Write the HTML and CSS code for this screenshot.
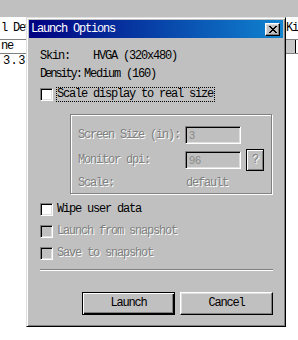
FILE: index.html
```html
<!DOCTYPE html>
<html lang="en">
<head>
  <meta charset="UTF-8">
  <title>Launch Options</title>
  <link rel="stylesheet" href="styles.css">
</head>
<body>
  <div class="screen">
    <!-- window behind the dialog -->
    <div class="bg-strip"></div>
    <div class="bg-row bg-head">
      <span class="bg-left">l Dev</span>
      <span class="bg-right">Kit</span>
    </div>
    <div class="bg-row bg-cols">
      <span class="bg-left">ne</span>
      <span class="bg-cell"></span>
    </div>
    <div class="bg-row bg-data">
      <span class="bg-left wide">3.3</span>
    </div>

    <div class="dialog">
      <div class="titlebar">
        <span class="title">Launch Options</span>
        <span class="close-btn">
          <svg width="8" height="7" viewBox="0 0 8 7" shape-rendering="crispEdges">
            <path fill="#000" d="M0 0h2v1H0z M6 0h2v1H6z M1 1h2v1H1z M5 1h2v1H5z M2 2h4v1H2z M3 3h2v1H3z M2 4h4v1H2z M1 5h2v1H1z M5 5h2v1H5z M0 6h2v1H0z M6 6h2v1H6z"/>
          </svg>
        </span>
      </div>

      <div class="dialog-body">
        <div class="info-row"><span class="info-label skin">Skin:</span><span>HVGA (320x480)</span></div>
        <div class="info-row"><span class="info-label density">Density:</span><span>Medium (160)</span></div>

        <div class="check-row first">
          <span class="checkbox"></span>
          <span class="check-label focused">Scale display to real size</span>
        </div>

        <div class="group">
          <div class="group-row">
            <span class="group-label disabled">Screen Size (in):</span>
            <span class="field">3</span>
          </div>
          <div class="group-row tall">
            <span class="group-label disabled">Monitor dpi:</span>
            <span class="field">96</span>
            <span class="help-btn disabled">?</span>
          </div>
          <div class="group-row short">
            <span class="group-label disabled">Scale:</span>
            <span class="scale-value disabled">default</span>
          </div>
        </div>

        <div class="check-row after-group">
          <span class="checkbox"></span>
          <span class="check-label">Wipe user data</span>
        </div>
        <div class="check-row">
          <span class="checkbox off"></span>
          <span class="check-label disabled">Launch from snapshot</span>
        </div>
        <div class="check-row">
          <span class="checkbox off"></span>
          <span class="check-label disabled">Save to snapshot</span>
        </div>

        <div class="separator"></div>

        <div class="buttons">
          <button class="btn btn-default">Launch</button>
          <button class="btn">Cancel</button>
        </div>
      </div>
    </div>
  </div>
</body>
</html>
```

FILE: styles.css
```css
body {
  margin: 0;
  background: #fff;
  font-family: "Liberation Mono", "DejaVu Sans Mono", monospace;
  font-size: 12px;
  letter-spacing: -1.2px;
  line-height: 13px;
  color: #000;
}
.screen {
  position: relative;
  width: 298px;
  height: 340px;
  overflow: hidden;
}

/* background window */
.bg-strip {
  height: 17px;
  background: #c0c0c0;
}
.bg-row {
  display: flex;
  justify-content: space-between;
  align-items: center;
  white-space: nowrap;
}
.bg-head {
  height: 22px;
  border-bottom: 1px solid #808080;
}
.bg-cols {
  height: 13px;
  border-bottom: 1px solid #808080;
}
.bg-data {
  height: 14px;
}
.bg-left {
  padding-left: 1px;
}
.bg-left.wide {
  padding-left: 3px;
  letter-spacing: 0.4px;
}
.bg-right {
  margin-right: -6px;
}
.bg-cell {
  width: 9px;
  height: 13px;
  margin-right: 2px;
  background: #c8c8c8;
  border-right: 1px solid #000;
}

/* dialog */
.dialog {
  position: absolute;
  left: 26px;
  top: 17px;
  width: 260px;
  height: 310px;
  box-sizing: border-box;
  padding: 2px;
  background: #c0c0c0;
  border: 1px solid;
  border-color: #dfdfdf #000 #000 #dfdfdf;
  box-shadow: inset 1px 1px 0 #fff, inset -1px -1px 0 #808080;
}
.titlebar {
  height: 18px;
  display: flex;
  align-items: center;
  justify-content: space-between;
  padding: 0 3px 0 2px;
  background: linear-gradient(to right, #000080, #1084d0);
  color: #fff;
}
.close-btn {
  width: 15px;
  height: 13px;
  box-sizing: border-box;
  display: flex;
  align-items: center;
  justify-content: center;
  background: #c0c0c0;
  border: 1px solid;
  border-color: #fff #000 #000 #fff;
  box-shadow: inset -1px -1px 0 #808080, inset 1px 1px 0 #dfdfdf;
}
.dialog-body {
  padding: 9px 10px 0 11px;
}

.info-row {
  height: 18px;
  display: flex;
  align-items: center;
  white-space: pre;
}
.info-label {
  flex-shrink: 0;
}
.info-label.skin {
  width: 53px;
}
.info-label.density {
  width: 44px;
  letter-spacing: -2.1px;
}

.check-row {
  height: 18px;
  margin-top: 4px;
  display: flex;
  align-items: center;
  gap: 3px;
}
.check-row.first {
  margin-top: 2px;
}
.check-row.after-group {
  margin-top: 6px;
}
.checkbox {
  width: 13px;
  height: 13px;
  box-sizing: border-box;
  background: #fff;
  border: 1px solid;
  border-color: #808080 #fff #fff #808080;
  box-shadow: inset 1px 1px 0 #000, inset -1px -1px 0 #dfdfdf;
}
.checkbox.off {
  background: #c0c0c0;
}
.check-label {
  padding: 1px 1px;
}
.check-label.focused {
  outline: 1px dotted #000;
  outline-offset: -1px;
  padding: 1px 2px 1px 1px;
}
.disabled {
  color: #808080;
  text-shadow: 1px 1px 0 #fff;
}

/* scale settings group */
.group {
  margin: 11px 0 0 30px;
  width: 202px;
  box-sizing: border-box;
  padding: 10px 0 1px 7px;
  border: 1px solid #808080;
  box-shadow: inset 1px 1px 0 #fff, 1px 1px 0 #fff;
}
.group-row {
  height: 20px;
  display: flex;
  align-items: center;
}
.group-row.tall {
  height: 22px;
  margin-top: 4px;
}
.group-row.short {
  height: 18px;
  margin-top: 3px;
}
.group-label {
  width: 107px;
  flex-shrink: 0;
}
.field {
  width: 56px;
  height: 18px;
  box-sizing: border-box;
  display: flex;
  align-items: center;
  padding-left: 3px;
  background: #c0c0c0;
  border: 1px solid;
  border-color: #808080 #fff #fff #808080;
  box-shadow: inset 1px 1px 0 #000, inset -1px -1px 0 #dfdfdf;
  font-family: "Liberation Sans", Arial, sans-serif;
  font-size: 11px;
  letter-spacing: 0;
  color: #8a8a8a;
}
.help-btn {
  width: 18px;
  height: 22px;
  margin-left: 5px;
  box-sizing: border-box;
  display: flex;
  align-items: center;
  justify-content: center;
  border: 1px solid #000;
  box-shadow: inset 1px 1px 0 #fff, inset -1px -1px 0 #808080;
}
.scale-value {
  padding-left: 1px;
}

.separator {
  margin-top: 7px;
  border-top: 1px solid #808080;
  border-bottom: 1px solid #fff;
}

.buttons {
  margin-top: 21px;
  display: flex;
  justify-content: flex-end;
  gap: 5px;
}
.btn {
  width: 93px;
  height: 23px;
  box-sizing: border-box;
  padding: 0;
  background: #c0c0c0;
  border: 1px solid;
  border-color: #fff #000 #000 #fff;
  box-shadow: inset -1px -1px 0 #808080, inset 1px 1px 0 #dfdfdf;
  font: inherit;
  letter-spacing: inherit;
  color: #000;
}
.btn-default {
  border-color: #000;
  box-shadow: inset 1px 1px 0 #fff, inset -1px -1px 0 #000, inset -2px -2px 0 #808080;
}
```
